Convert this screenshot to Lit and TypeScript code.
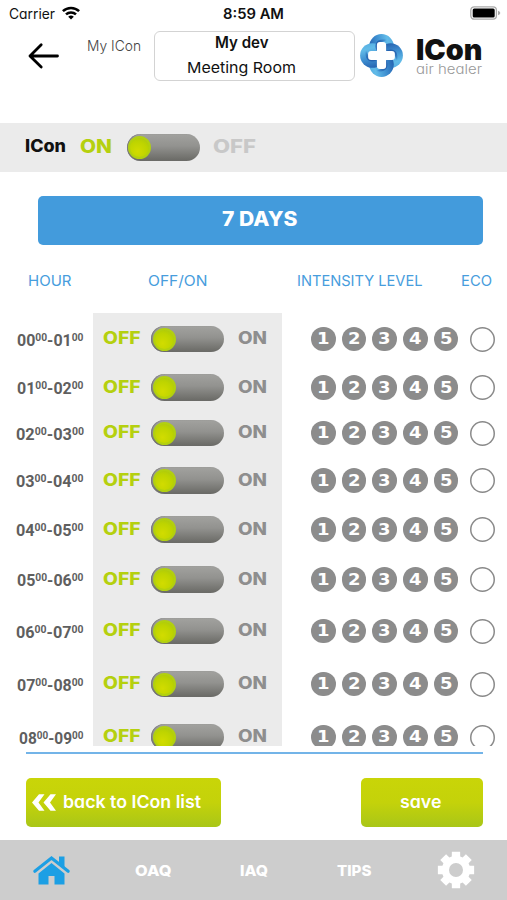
import { LitElement, html, css, svg } from "lit";
import { customElement } from "lit/decorators.js";

const CAP = 0.727;

/** A single line of text, boxed to its cap height and set to an exact measure. */
const label = (text: string, width: number, size: number, cls = "") => {
  const h = size * CAP;
  return html`<svg class="label ${cls}" width=${width} height=${h}>
    <text y=${h} font-size=${size} textLength=${width} lengthAdjust="spacingAndGlyphs">${text}</text>
  </svg>`;
};

const hourLabel = (from: string, to: string, width: number) =>
  html`<svg class="label hours" width=${width} height="12">
    <text y="11.8" font-size="16.5" textLength=${width} lengthAdjust="spacingAndGlyphs">${from}<tspan font-size="10.6" dy="-4.4">00</tspan><tspan dy="4.4">-${to}</tspan><tspan font-size="10.6" dy="-4.4">00</tspan></text>
  </svg>`;

const ROWS = [
  { from: "00", to: "01", height: 52, width: 66.5 },
  { from: "01", to: "02", height: 45, width: 66.5 },
  { from: "02", to: "03", height: 46, width: 68 },
  { from: "03", to: "04", height: 49, width: 67.5 },
  { from: "04", to: "05", height: 49, width: 67.5 },
  { from: "05", to: "06", height: 51, width: 66.5 },
  { from: "06", to: "07", height: 52, width: 67.5 },
  { from: "07", to: "08", height: 54, width: 66.5 },
  { from: "08", to: "09", height: 52, width: 64.5 },
];

const gearPath = (() => {
  const pts: string[] = [];
  for (let i = 0; i < 8; i++) {
    const a = (i * Math.PI) / 4;
    for (const [r, d] of [[14.2, -0.3], [18.6, -0.225], [18.6, 0.225], [14.2, 0.3]]) {
      pts.push(`${(19 + r * Math.sin(a + d)).toFixed(2)} ${(19 - r * Math.cos(a + d)).toFixed(2)}`);
    }
  }
  return `M${pts.join("L")}Z M26 19A7 7 0 1 0 12 19A7 7 0 1 0 26 19Z`;
})();

@customElement("slide-toggle")
class SlideToggle extends LitElement {
  static styles = css`
    :host { display: block; flex: none; }
    .track {
      display: flex; align-items: center; box-sizing: border-box;
      width: 73px; height: 26.5px; padding-left: 1.5px; border-radius: 14px;
      background: linear-gradient(#a2a29f, #92928f 45%, #747470 85%, #696965);
      box-shadow: inset 1px 0 1px #777;
    }
    .knob {
      box-sizing: border-box; width: 23px; height: 23px; border-radius: 50%;
      border: 2px solid #b2d010;
      background: radial-gradient(circle at 40% 70%, #d2dc00, #bed400 55%, #a4c313);
    }
  `;
  render() {
    return html`<div class="track"><div class="knob"></div></div>`;
  }
}

@customElement("app-root")
class AppRoot extends LitElement {
  static styles = css`
    :host {
      display: flex; flex-direction: column; width: 507px; height: 900px; overflow: hidden;
      background: #fff; color: #111; font-family: Inter, "Liberation Sans", sans-serif;
    }
    svg { display: block; flex: none; overflow: visible; }
    .label text { fill: currentColor; font-feature-settings: "cv11"; }
    .light { font-weight: 300; }
    .semi { font-weight: 600; }
    .heavy { font-weight: 800; }
    .black { font-weight: 900; }

    .status { display: flex; align-items: flex-start; height: 31px; flex: none; box-sizing: border-box; padding: 6px 6px 0 9px; }
    .status .label { margin-top: 3px; }
    .wifi { margin-left: 7px; }
    .time { margin-left: 143px; }
    .battery { margin-left: auto; }

    .header { display: flex; align-items: flex-start; height: 92px; flex: none; padding-left: 28px; }
    .arrow { margin-top: 12px; }
    .crumb { margin: 9px 0 0 28px; color: #444; }
    .device {
      box-sizing: border-box; width: 201px; height: 50px; margin-left: 12.5px; padding-top: 5px;
      border: 1.5px solid #d3d3d3; border-radius: 6px;
      display: flex; flex-direction: column; gap: 13.5px;
    }
    .device .name { margin-left: 60px; }
    .device .room { margin-left: 32px; }
    .logo { margin: 3px 0 0 5.5px; }
    .brand { display: flex; flex-direction: column; gap: 5.5px; margin: 8px 0 0 12.5px; }
    .tagline { color: #999; }

    .power { display: flex; align-items: center; height: 49px; flex: none; background: #ebebeb; padding-left: 25px; }
    .power .label { position: relative; top: -1.5px; }
    .on { color: #b5d00f; margin-left: 14px; }
    .power slide-toggle { margin-left: 14.5px; }
    .off { color: #c8c8c8; margin-left: 13px; }

    .days {
      display: flex; justify-content: center; flex: none; box-sizing: border-box; height: 49px; padding-top: 15.5px;
      margin: 24px 24.5px 0 37.5px; border-radius: 5px; background: #439bdc; color: #fff;
    }
    .columns { display: flex; flex: none; height: 38px; padding: 30px 0 0 27.5px; color: #479ddd; }
    .c2 { margin-left: 77px; }
    .c3 { margin-left: 89.5px; }
    .c4 { margin-left: 38px; }

    .list { height: 433px; overflow: hidden; flex: none; }
    .row { display: flex; align-items: stretch; }
    .row > div { display: flex; align-items: center; flex: none; box-sizing: border-box; }
    .hour { width: 93px; padding: 1px 9.5px 0 0; justify-content: flex-end; color: #5f5f5f; }
    .hours text { font-family: Roboto, sans-serif; font-weight: 700; }
    .switch { width: 189px; padding-left: 10px; background: #ebebeb; }
    .switch .label { position: relative; top: -0.5px; }
    .switch slide-toggle { margin-left: 10.5px; }
    .green { color: #b5d00f; }
    .grey { color: #8e8e8e; margin-left: 13.5px; }
    .levels { padding-left: 29.3px; gap: 6.1px; }
    .level {
      box-sizing: border-box; width: 24.5px; height: 24.5px; border-radius: 50%; background: #8c8c8c; color: #fff;
      display: flex; align-items: center; justify-content: center; padding-bottom: 2px;
    }
    .digit text { font-family: "DejaVu Sans", sans-serif; font-weight: 700; }
    .eco { width: 25px; height: 25px; flex: none; box-sizing: border-box; border-radius: 50%; margin-left: 6px; box-shadow: inset 0 0 0 1.5px #8a8a8a; }

    .rule { height: 2px; flex: none; margin: 5.5px 24.5px 0 25.5px; background: #73b4e8; }
    .actions { display: flex; justify-content: space-between; flex: none; height: 49px; margin: 24.5px 24.5px 0 25.5px; }
    .button {
      display: flex; box-sizing: border-box; border-radius: 5px; color: #fff;
      background: linear-gradient(#c9d508, #c4d20a 50%, #a9c618);
    }
    .back { width: 195.5px; padding: 16px 0 0 6px; }
    .back .label { margin-left: 7px; margin-top: .5px; }
    .save { width: 122px; padding: 16.5px 0 0 39.5px; }

    .nav { display: flex; align-items: center; flex: 1; margin-top: 13px; padding-left: 33px; background: #cdcdcd; color: #fff; }
    .oaq { margin-left: 64.5px; }
    .iaq { margin-left: 68.5px; }
    .tips { margin-left: 69.5px; }
    .gear { margin-left: 65px; }
  `;

  render() {
    return html`
      <div class="status">
        ${label("Carrier", 46, 14)}
        <svg class="wifi" width="18" height="14" viewBox="0 0 18 14" fill="none" stroke="#000" stroke-width="2.5">
          <path d="M.9 5.2A11.6 11.6 0 0 1 17.1 5.2M4 8.4A7.2 7.2 0 0 1 14 8.4" />
          <path d="M9 13.6L6.2 10.8A4 4 0 0 1 11.8 10.8Z" fill="#000" stroke="none" />
        </svg>
        ${label("8:59 AM", 61, 14, "time semi")}
        <svg class="battery" width="31" height="14" viewBox="0 0 31 14">
          <rect x=".8" y=".8" width="25.6" height="12.4" rx="3.4" fill="#fff" stroke="#aaa" stroke-width="1.3" />
          <rect x="2.7" y="2.5" width="22" height="9" rx="1.5" />
          <path d="M28 4.8Q30.3 5.5 30.3 7T28 9.2Z" fill="#aaa" />
        </svg>
      </div>

      <div class="header">
        <svg class="arrow" width="31" height="26" viewBox="0 0 31 26" fill="none" stroke="#000" stroke-width="2.8" stroke-linecap="round" stroke-linejoin="round">
          <path d="M29.5 13H2M13.2 1.8L2 13L13.2 24" />
        </svg>
        ${label("My ICon", 54, 14.5, "crumb light")}
        <div class="device">
          ${label("My dev", 53.5, 15.3, "name semi")}
          ${label("Meeting Room", 109, 15, "room")}
        </div>
        <svg class="logo" width="43" height="43" viewBox="-21.5 -21.5 43 43">
          <defs>
            <linearGradient id="petal" gradientUnits="userSpaceOnUse" x1="-12" y1="-8" x2="13" y2="-14">
              <stop offset="0" stop-color="#2765b2" /><stop offset=".35" stop-color="#3d8ed0" />
              <stop offset=".75" stop-color="#62bbe8" /><stop offset="1" stop-color="#55aee2" />
            </linearGradient>
            <linearGradient id="fold" gradientUnits="userSpaceOnUse" x1="-11" y1="-8" x2="6" y2="-14">
              <stop offset="0" stop-color="#2868b5" /><stop offset=".5" stop-color="#2460ae" /><stop offset="1" stop-color="#4a9fda" />
            </linearGradient>
          </defs>
          ${[0, 90, 180, 270].map((a) => svg`<g transform="rotate(${a})">
            <circle cy="-9.1" r="12.3" fill="url(#petal)" />
          </g>`)}
          ${[0, 90, 180, 270].map((a) => svg`<g transform="rotate(${a})">
            <path d="M-5 -5C-8 -12 -4 -17.500 5 -15.500C0 -14 -4 -11 -3 -4Z" fill="url(#fold)" />
          </g>`)}
          <rect x="-4.6" y="-13.4" width="9.2" height="26.8" rx="3" fill="#fff" />
          <rect x="-13.4" y="-4.6" width="26.8" height="9.2" rx="3" fill="#fff" />
        </svg>
        <div class="brand">
          ${label("ICon", 66.5, 28.5, "black")}
          ${label("air healer", 66, 13, "tagline light")}
        </div>
      </div>

      <div class="power">
        ${label("ICon", 41, 17, "heavy")}
        ${label("ON", 32, 18.8, "on heavy")}
        <slide-toggle></slide-toggle>
        ${label("OFF", 43, 18.8, "off heavy")}
      </div>

      <div class="days">${label("7 DAYS", 75.5, 19.5, "heavy")}</div>

      <div class="columns">
        ${label("HOUR", 43.5, 14.8)}
        ${label("OFF/ON", 59.5, 14.8, "c2")}
        ${label("INTENSITY LEVEL", 125.5, 14.8, "c3")}
        ${label("ECO", 31, 14.8, "c4")}
      </div>

      <div class="list">
        ${ROWS.map((r) => html`
          <div class="row" style="height:${r.height}px">
            <div class="hour">${hourLabel(r.from, r.to, r.width)}</div>
            <div class="switch">
              ${label("OFF", 37.5, 17, "green heavy")}
              <slide-toggle></slide-toggle>
              ${label("ON", 29, 17, "grey heavy")}
            </div>
            <div class="levels">
              ${[1, 2, 3, 4, 5].map((n) => html`<span class="level">${label(String(n), 12.5, 16, "digit")}</span>`)}
              <span class="eco"></span>
            </div>
          </div>`)}
      </div>

      <div class="rule"></div>
      <div class="actions">
        <div class="button back">
          <svg width="24" height="17" viewBox="0 0 24 17" fill="#fff">
            <path d="M7 .3H12.500L6.500 8.500L12.500 16.700H7L0 8.500ZM18.500 .3H24L18 8.500L24 16.700H18.500L11.500 8.500Z" />
          </svg>
          ${label("back to ICon list", 138, 17.5, "semi")}
        </div>
        <div class="button save">${label("save", 41.5, 17.5, "semi")}</div>
      </div>

      <div class="nav">
        <svg width="37" height="29" viewBox="0 0 37 29" fill="#1c9fe4">
          <path d="M18.500 7L31.500 17.500V28.500H21.500V20H15.500V28.500H5.500V17.500Z" />
          <path d="M26 .5H31.500V12L26 8Z" />
          <path d="M1.800 15.300L18.500 2L35.200 15.300" fill="none" stroke="#1c9fe4" stroke-width="3.100" stroke-linecap="round" />
        </svg>
        ${label("OAQ", 36.5, 15, "oaq heavy")}
        ${label("IAQ", 28, 15, "iaq heavy")}
        ${label("TIPS", 34.5, 15, "tips heavy")}
        <svg class="gear" width="38" height="38" viewBox="0 0 38 38"><path d=${gearPath} fill="#fff" fill-rule="evenodd" /></svg>
      </div>
    `;
  }
}
